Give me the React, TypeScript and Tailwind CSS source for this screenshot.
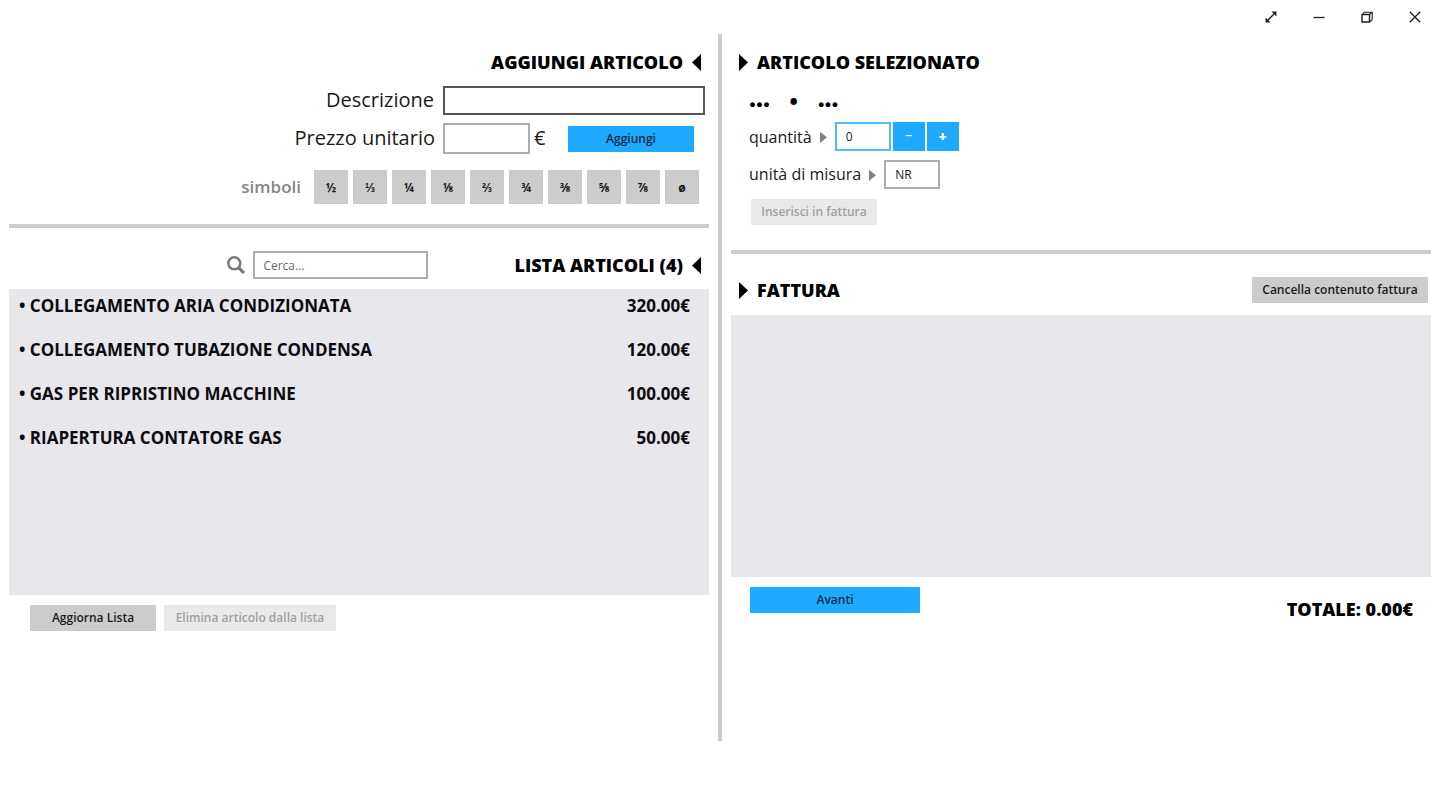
import React, { useState } from 'react';
import clsx from 'clsx';

interface Article {
    name: string;
    price: number;
}

const SYMBOLS = ['½', '⅓', '¼', '⅛', '⅔', '¾', '⅜', '⅝', '⅞', 'ø'];

const ARTICLES: Article[] = [
    { name: 'COLLEGAMENTO ARIA CONDIZIONATA', price: 320 },
    { name: 'COLLEGAMENTO TUBAZIONE CONDENSA', price: 120 },
    { name: 'GAS PER RIPRISTINO MACCHINE', price: 100 },
    { name: 'RIAPERTURA CONTATORE GAS', price: 50 },
];

const formatPrice = (value: number) => `${value.toFixed(2)}€`;

interface FlatButtonProps extends React.ButtonHTMLAttributes<HTMLButtonElement> {
    accent?: boolean;
}

const FlatButton: React.FC<FlatButtonProps> = ({ accent, className, ...props }) => (
    <button
        type="button"
        className={clsx(
            'h-[26px] text-[12px] leading-[26px] font-semibold whitespace-nowrap',
            accent ? 'bg-[#1eabff] text-[#042a48]' : 'bg-[#cccccc] text-[#1a1a1a]',
            'disabled:bg-[#e9e9e9] disabled:text-[#a0a0a0]',
            className
        )}
        {...props}
    />
);

const Arrow: React.FC<{ left?: boolean; small?: boolean }> = ({ left, small }) => (
    <svg
        viewBox="0 0 9 18"
        preserveAspectRatio="none"
        className={clsx('shrink-0', small ? 'w-[7px] h-3 text-[#808080]' : 'w-[9px] h-[18px] text-black')}
        fill="currentColor"
        aria-hidden="true"
    >
        <path d={left ? 'M9 1v17L0 9.5z' : 'M0 1v17l9-8.5z'} />
    </svg>
);

const Heading: React.FC<{ left?: boolean; children: React.ReactNode }> = ({ left, children }) => (
    <h2
        className={clsx(
            'flex items-center gap-[9px] text-[18px] leading-7 font-extrabold whitespace-nowrap text-black',
            left && 'flex-row-reverse'
        )}
    >
        <Arrow left={left} />
        <span>{children}</span>
    </h2>
);

const TitleBar: React.FC = () => {
    const glyph = 'w-3 h-3';
    return (
        <header className="h-[34px] pr-px flex items-center justify-end text-[#202020]">
            <button type="button" aria-label="Schermo intero" className="w-12 flex justify-center">
                <svg viewBox="0 0 12 12" className={glyph} fill="none" stroke="currentColor" strokeWidth="1.3">
                    <path d="m2 10 8-8" />
                    <path d="M7 .8h4.2V5zM.8 7v4.2H5z" fill="currentColor" strokeWidth=".4" />
                </svg>
            </button>
            <button type="button" aria-label="Riduci a icona" className="w-12 flex justify-center">
                <svg viewBox="0 0 12 12" className={glyph} fill="none" stroke="currentColor" strokeWidth="1.3">
                    <path d="M.5 6.5h11" />
                </svg>
            </button>
            <button type="button" aria-label="Ripristina" className="w-12 flex justify-center">
                <svg viewBox="0 0 12 12" className={glyph} fill="none" stroke="currentColor" strokeWidth="1.4">
                    <path d="M1 3.5h7.5V11H1z" />
                    <path d="M2 3l1.2-1.8h8v7.6L9 10.5M8.5 3.5l2.5-2.3" strokeWidth="1.1" />
                </svg>
            </button>
            <button type="button" aria-label="Chiudi" className="w-12 flex justify-center">
                <svg viewBox="0 0 12 12" className={glyph} fill="none" stroke="currentColor" strokeWidth="1.3">
                    <path d="m.8.8 10.4 10.4M11.2.8.8 11.2" />
                </svg>
            </button>
        </header>
    );
};

const AddArticle: React.FC = () => {
    const [description, setDescription] = useState('');

    return (
        <form className="flex flex-col items-end" onSubmit={e => e.preventDefault()}>
            <div className="pt-[14px] pr-2">
                <Heading left>AGGIUNGI ARTICOLO</Heading>
            </div>
            <div className="mt-[10px] mr-1 flex items-center gap-[9px]">
                <label htmlFor="description" className="pb-px text-[20px] leading-7 text-[#1a1a1a]">
                    Descrizione
                </label>
                <input
                    id="description"
                    value={description}
                    onChange={e => setDescription(e.target.value)}
                    className="w-[262px] h-[29px] border-2 border-[#555555] px-2 text-[12px] outline-none"
                />
            </div>
            <div className="mt-2 mr-[15px] flex items-center">
                <label htmlFor="price" className="pb-px mr-2 text-[20px] leading-7 text-[#1a1a1a]">
                    Prezzo unitario
                </label>
                <input
                    id="price"
                    className="w-[87px] h-[31px] border-2 border-[#adadad] px-2 text-[12px] outline-none"
                />
                <span className="w-[38px] pb-px pl-1 text-[20px] leading-7 text-[#1a1a1a]">€</span>
                <FlatButton accent className="w-[126px]">
                    Aggiungi
                </FlatButton>
            </div>
            <div className="mt-4 mr-[10px] flex items-center gap-[5px]">
                <span className="mr-2 text-[17px] leading-7 font-semibold text-[#858585]">simboli</span>
                {SYMBOLS.map(symbol => (
                    <button
                        key={symbol}
                        type="button"
                        onClick={() => setDescription(description + symbol)}
                        className="size-[34px] pt-[2px] bg-[#cccccc] text-[12px] font-bold text-[#1a1a1a]"
                    >
                        {symbol}
                    </button>
                ))}
            </div>
        </form>
    );
};

const ArticleList: React.FC = () => {
    const [query, setQuery] = useState('');
    const visible = ARTICLES.filter(a => a.name.toLowerCase().includes(query.toLowerCase()));

    return (
        <>
            <div className="mt-[23px] pr-2 flex items-center justify-end">
                <label htmlFor="search" aria-label="Cerca" className="mr-2 text-[#777777]">
                    <svg viewBox="0 0 18 18" className="size-[18px]" fill="none" stroke="currentColor" aria-hidden="true">
                        <circle cx="7.3" cy="7.3" r="6" strokeWidth="2.5" />
                        <path d="m11.8 11.8 5.2 5.2" strokeWidth="3.2" />
                    </svg>
                </label>
                <input
                    id="search"
                    value={query}
                    onChange={e => setQuery(e.target.value)}
                    placeholder="Cerca..."
                    className="mr-[86px] w-[175px] h-7 border-2 border-[#adadad] px-2 text-[12px] outline-none placeholder:text-[#666666]"
                />
                <Heading left>LISTA ARTICOLI ({ARTICLES.length})</Heading>
            </div>
            <ul className="mt-[10px] flex-1 bg-[#e8e7ec] pl-[10px] pr-[19px] text-[17px] font-bold text-[#0c0c10]">
                {visible.map(article => (
                    <li key={article.name} className="h-11 pt-[5px] flex justify-between leading-6">
                        <span>• {article.name}</span>
                        <span>{formatPrice(article.price)}</span>
                    </li>
                ))}
            </ul>
            <div className="mt-[10px] ml-[21px] mb-[110px] flex gap-2">
                <FlatButton className="w-[126px]">Aggiorna Lista</FlatButton>
                <FlatButton className="w-[172px]" disabled>
                    Elimina articolo dalla lista
                </FlatButton>
            </div>
        </>
    );
};

const SelectedArticle: React.FC = () => {
    const [quantity, setQuantity] = useState(0);

    return (
        <section className="flex flex-col items-start pl-[18px]">
            <div className="-ml-[10px] pt-[14px]">
                <Heading>ARTICOLO SELEZIONATO</Heading>
            </div>
            <p className="mt-2 flex items-center gap-5 text-[24px] leading-7 font-extrabold text-black">
                <span className="pb-1">...</span>
                <span className="pt-1 text-[20px]">•</span>
                <span className="pb-1">...</span>
            </p>
            <div className="mt-[6px] flex items-center">
                <label htmlFor="quantity" className="mr-2 text-[16px] leading-7 text-[#1a1a1a]">
                    quantità
                </label>
                <Arrow small />
                <input
                    id="quantity"
                    value={quantity}
                    onChange={e => setQuantity(Number(e.target.value) || 0)}
                    className="ml-2 w-14 h-[29px] border-2 border-[#4dbbff] pl-[9px] text-[12px] text-[#1a1a1a] outline-none"
                />
                <button
                    type="button"
                    aria-label="Diminuisci"
                    onClick={() => setQuantity(Math.max(0, quantity - 1))}
                    className="ml-[2px] pb-1 w-8 h-[29px] bg-[#1eabff] text-[14px] font-normal text-white"
                >
                    –
                </button>
                <button
                    type="button"
                    aria-label="Aumenta"
                    onClick={() => setQuantity(quantity + 1)}
                    className="ml-[2px] w-8 h-[29px] bg-[#1eabff] text-[14px] font-extrabold text-white"
                >
                    +
                </button>
            </div>
            <div className="mt-[9px] flex items-center">
                <label htmlFor="unit" className="pb-px mr-2 text-[16px] leading-7 text-[#1a1a1a]">
                    unità di misura
                </label>
                <Arrow small />
                <input
                    id="unit"
                    defaultValue="NR"
                    className="ml-2 w-14 h-[29px] border-2 border-[#adadad] pl-[9px] text-[12px] text-[#1a1a1a] outline-none"
                />
            </div>
            <FlatButton className="mt-[10px] ml-[2px] w-[126px]" disabled>
                Inserisci in fattura
            </FlatButton>
        </section>
    );
};

const Invoice: React.FC = () => (
    <>
        <div className="mt-[22px] pl-2 pr-[3px] flex items-center justify-between">
            <Heading>FATTURA</Heading>
            <FlatButton className="w-[176px]">Cancella contenuto fattura</FlatButton>
        </div>
        <div className="mt-[11px] flex-1 bg-[#e8e7ec]" />
        <div className="mt-[10px] mb-[118px] pl-[19px] pr-[18px] flex items-start justify-between">
            <FlatButton accent className="w-[170px]">
                Avanti
            </FlatButton>
            <p className="pt-2 text-[18px] leading-7 font-extrabold text-black">TOTALE: {formatPrice(0)}</p>
        </div>
    </>
);

export default function App() {
    return (
        <div className="min-h-screen flex flex-col bg-white pb-[69px] font-['Open_Sans',sans-serif]">
            <TitleBar />
            <main className="flex-1 flex">
                <div className="flex-1 min-w-0 px-[9px] flex flex-col">
                    <AddArticle />
                    <hr className="mt-5 border-0 h-1 bg-[#cccccc]" />
                    <ArticleList />
                </div>
                <div className="w-1 bg-[#cccccc]" />
                <div className="flex-1 min-w-0 px-[9px] flex flex-col">
                    <SelectedArticle />
                    <hr className="mt-[25px] border-0 h-1 bg-[#cccccc]" />
                    <Invoice />
                </div>
            </main>
        </div>
    );
}
